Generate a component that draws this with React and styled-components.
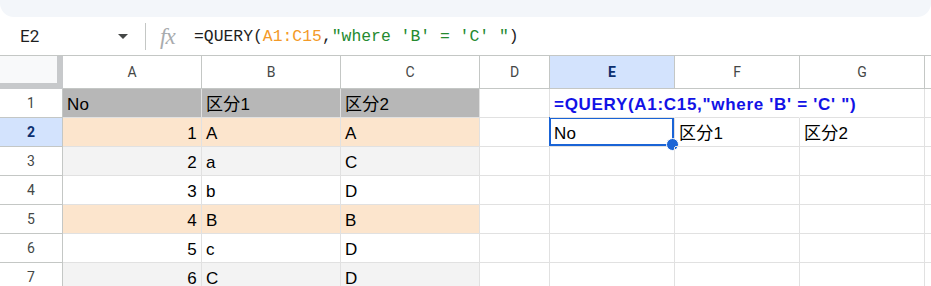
import React from 'react'
import styled, { createGlobalStyle, css } from 'styled-components'

const GlobalStyle = createGlobalStyle`
  html, body {
    margin: 0;
    padding: 0;
    background: #FFF;
  }
  body {
    font-family: "Liberation Sans", Arial, sans-serif;
  }
`

const Page = styled.div`
  width: 931px;
  height: 286px;
  overflow: hidden;
  background: #FFF;
`

const ToolbarEdge = styled.div`
  height: 17px;
  background: #f3f6fa;
  border-bottom-left-radius: 14px;
  border-bottom-right-radius: 14px;
`

const FormulaBar = styled.div`
  display: flex;
  align-items: center;
  height: 38px;
  border-bottom: 1px solid #c4c7c5;
`

const NameBox = styled.div`
  display: flex;
  align-items: center;
  width: 128px;
  box-sizing: border-box;
  padding-left: 20px;
  font-family: Roboto, "Liberation Sans", sans-serif;
  font-size: 17px;
  color: #1f1f1f;
`

const Caret = styled.span`
  margin-left: auto;
  width: 0;
  height: 0;
  border-left: 5px solid transparent;
  border-right: 5px solid transparent;
  border-top: 5px solid #444746;
`

const Divider = styled.span`
  width: 1px;
  height: 27px;
  margin-left: 17px;
  background: #c4c7c5;
`

const FxIcon = styled.span`
  margin-left: 14px;
  width: 22px;
  font-family: "Liberation Serif", serif;
  font-style: italic;
  font-size: 23px;
  letter-spacing: -1px;
  color: #a8abae;
  line-height: 1;
`

const Formula = styled.div`
  margin-left: 12px;
  font-family: "Liberation Mono", "DejaVu Sans Mono", monospace;
  font-size: 16.4px;
  color: #1f1f1f;
  white-space: pre;
`

const Range = styled.span`
  color: #f39a28;
`

const Str = styled.span`
  color: #248a2f;
`

const Sheet = styled.div`
  display: grid;
  grid-template-columns: 63px 139px 139px 139px 70px 125px 125px 125px 1fr;
  grid-template-rows: 33px repeat(7, 29px);
`

const HeaderCell = styled.div`
  display: flex;
  align-items: center;
  justify-content: center;
  box-sizing: border-box;
  border-right: 1px solid #c4c7c5;
  border-bottom: 1px solid #c4c7c5;
  font-family: Roboto, "Liberation Sans", sans-serif;
  font-size: 14px;
  color: #444746;
  background: ${p => (p.$active ? '#d3e3fd' : '#fff')};
  ${p => p.$active && css`
    font-weight: 700;
    color: #0b2f6e;
  `}
`

const Corner = styled.div`
  box-sizing: border-box;
  background: #f8f9fa;
  border-right: 6px solid #c7c9cb;
  border-bottom: 6px solid #c7c9cb;
`

const tones = {
  gray: '#b7b7b7',
  peach: '#fce5cd',
  light: '#f3f3f3',
  white: 'transparent',
}

const Cell = styled.div`
  position: relative;
  display: flex;
  align-items: flex-end;
  justify-content: ${p => (p.$num ? 'flex-end' : 'flex-start')};
  box-sizing: border-box;
  padding: 0 4px 2px 4px;
  border-right: 1px solid ${p => (p.$noRight ? 'transparent' : '#e1e1e1')};
  border-bottom: 1px solid #e1e1e1;
  background: ${p => tones[p.$tone || 'white']};
  font-family: "Liberation Sans", Arial, "Noto Sans CJK JP", sans-serif;
  font-size: 17px;
  letter-spacing: 0.3px;
  color: #000;
  white-space: nowrap;
  ${p => p.$overflow && css`
    z-index: 1;
    overflow: visible;
    font-weight: 700;
    letter-spacing: 0.7px;
    color: #1212e6;
  `}
`

const Selection = styled.div`
  position: absolute;
  top: -1px;
  left: -1px;
  right: 0;
  bottom: 0;
  border: 2px solid #1a64d6;
  pointer-events: none;
`

const Handle = styled.span`
  position: absolute;
  right: -7px;
  bottom: -7px;
  width: 11px;
  height: 11px;
  border-radius: 50%;
  background: #1a64d6;
  border: 1px solid #fff;
`

const columns = ['A', 'B', 'C', 'D', 'E', 'F', 'G', '']

const rows = [
  { n: 1, tone: 'gray', data: ['No', '区分1', '区分2'] },
  { n: 2, tone: 'peach', data: [1, 'A', 'A'] },
  { n: 3, tone: 'light', data: [2, 'a', 'C'] },
  { n: 4, tone: 'white', data: [3, 'b', 'D'] },
  { n: 5, tone: 'peach', data: [4, 'B', 'B'] },
  { n: 6, tone: 'white', data: [5, 'c', 'D'] },
  { n: 7, tone: 'light', data: [6, 'C', 'D'] },
]

const queryText = '=QUERY(A1:C15,"where \'B\' = \'C\' ")'
const result = ['No', '区分1', '区分2']

const App = () => (
  <Page>
    <GlobalStyle />
    <ToolbarEdge />
    <FormulaBar>
      <NameBox>
        E2
        <Caret />
      </NameBox>
      <Divider />
      <FxIcon>fx</FxIcon>
      <Formula>
        =QUERY(<Range>A1:C15</Range>,<Str>"where 'B' = 'C' "</Str>)
      </Formula>
    </FormulaBar>
    <Sheet>
      <Corner />
      {columns.map((c, i) => (
        <HeaderCell key={'h' + i} $active={c === 'E'}>{c}</HeaderCell>
      ))}
      {rows.map(row => (
        <React.Fragment key={row.n}>
          <HeaderCell $active={row.n === 2}>{row.n}</HeaderCell>
          {row.data.map((v, i) => (
            <Cell
              key={i}
              $tone={row.tone}
              $num={typeof v === 'number'}
            >
              {v}
            </Cell>
          ))}
          <Cell />
          {row.n === 1 && (
            <>
              <Cell $overflow $noRight>{queryText}</Cell>
              <Cell $noRight />
              <Cell />
            </>
          )}
          {row.n === 2 && (
            <>
              <Cell>
                {result[0]}
                <Selection>
                  <Handle />
                </Selection>
              </Cell>
              <Cell>{result[1]}</Cell>
              <Cell>{result[2]}</Cell>
            </>
          )}
          {row.n > 2 && (
            <>
              <Cell />
              <Cell />
              <Cell />
            </>
          )}
          <Cell />
        </React.Fragment>
      ))}
    </Sheet>
  </Page>
)

export default App
